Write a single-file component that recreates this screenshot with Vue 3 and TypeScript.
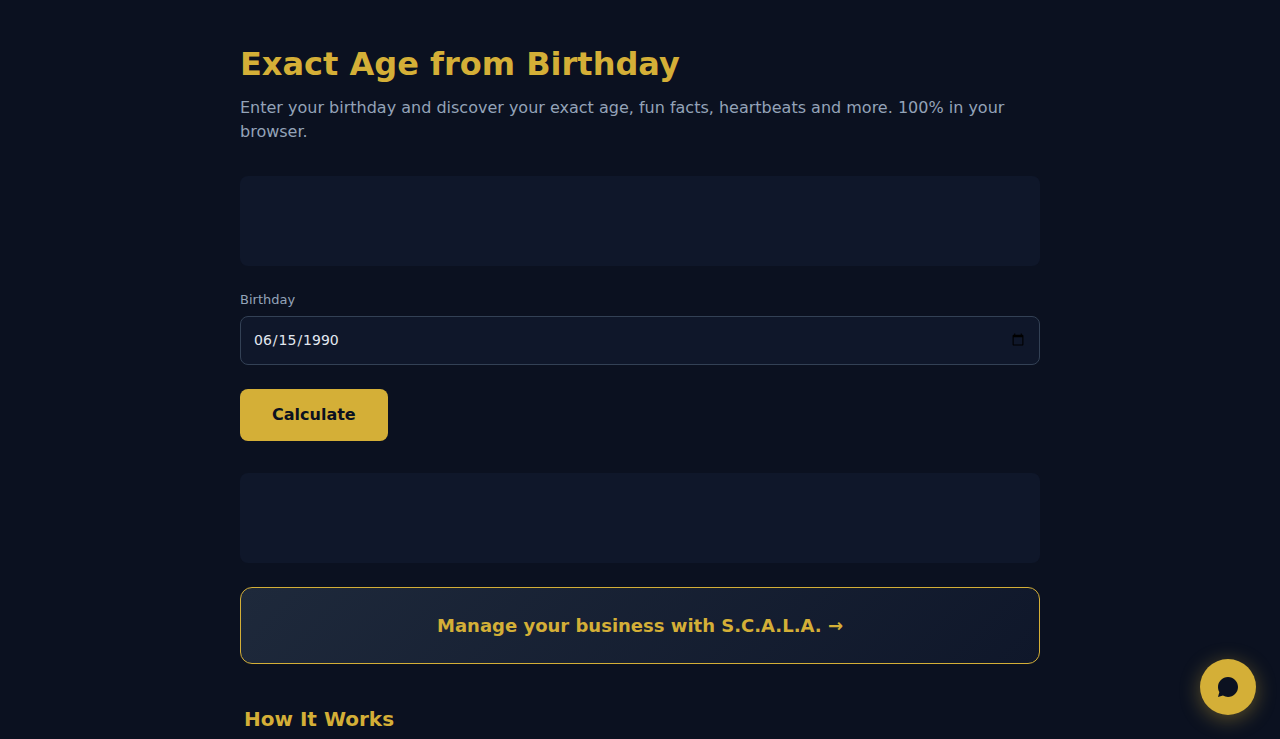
<script setup lang="ts">
import { ref } from 'vue'

const birthday = ref<string>('1990-06-15')
const years = ref<number | null>(null)

function calculate(): void {
  const born = new Date(birthday.value)
  const now = new Date()
  let age = now.getFullYear() - born.getFullYear()
  const beforeBirthday =
    now.getMonth() < born.getMonth() ||
    (now.getMonth() === born.getMonth() && now.getDate() < born.getDate())
  if (beforeBirthday) age -= 1
  years.value = age
}
</script>

<template>
  <main class="page">
    <h1>Exact Age from Birthday</h1>
    <p class="intro">
      Enter your birthday and discover your exact age, fun facts, heartbeats and more. 100% in your browser.
    </p>
    <div class="slot"></div>
    <form @submit.prevent="calculate">
      <label for="birthday">Birthday</label>
      <input id="birthday" v-model="birthday" type="date" />
      <button class="calculate" type="submit">Calculate</button>
    </form>
    <output v-if="years !== null" class="result">{{ years }}</output>
    <div class="slot"></div>
    <a class="promo" href="#">Manage your business with S.C.A.L.A. →</a>
    <section class="how">
      <h2>How It Works</h2>
    </section>
  </main>
  <button class="chat" type="button" aria-label="Open chat">
    <svg viewBox="0 0 24 24" width="24" height="24" aria-hidden="true">
      <path d="M12 2C6.48 2 2 6.48 2 12c0 1.85.5 3.58 1.38 5.06L2 22l4.94-1.38A9.95 9.95 0 0 0 12 22c5.52 0 10-4.48 10-10S17.52 2 12 2z" />
    </svg>
  </button>
</template>

<style>
body {
  margin: 0;
  background: #0b1120;
}
</style>

<style scoped>
.page {
  box-sizing: border-box;
  max-width: 848px;
  margin: 0 auto;
  padding: 40px 24px 0;
  color: #e2e8f0;
  font-family: "DejaVu Sans", sans-serif;
  font-size: 16px;
  line-height: 24px;
}
h1 {
  margin: 0 0 8px;
  color: #d4af37;
  font-size: 32px;
  line-height: 48px;
}
.intro {
  margin: 0 0 32px;
  color: #94a3b8;
}
.slot {
  min-height: 90px;
  margin-bottom: 24px;
  border-radius: 8px;
  background: #0f172a;
}
form {
  display: flex;
  flex-direction: column;
  align-items: flex-start;
  margin-bottom: 32px;
}
label {
  margin-bottom: 6px;
  color: #94a3b8;
  font-size: 13px;
  line-height: 20px;
}
input {
  box-sizing: border-box;
  width: 100%;
  height: 49px;
  margin: 0 0 24px;
  padding: 12px 12px 14px;
  border: 1px solid #334155;
  border-radius: 8px;
  background: #0f172a;
  color: #e2e8f0;
  font-family: inherit;
  font-size: 14px;
}
.calculate {
  padding: 14px 32px;
  border: 0;
  border-radius: 8px;
  background: #d4af37;
  color: #0b1120;
  font: bold 16px/24px "DejaVu Sans", sans-serif;
  cursor: pointer;
}
.result {
  display: block;
  margin-bottom: 24px;
}
.promo {
  display: block;
  padding: 24px;
  border: 1px solid #d4af37;
  border-radius: 12px;
  background: linear-gradient(135deg, #1e293b, #0f172a);
  color: #d4af37;
  font-size: 18px;
  font-weight: bold;
  line-height: 27px;
  text-align: center;
  text-decoration: none;
}
.how {
  margin-top: 40px;
  padding: 0 4px;
}
h2 {
  margin: 0;
  color: #d4af37;
  font-size: 20px;
  line-height: 30px;
}
.chat {
  position: fixed;
  right: 24px;
  bottom: 24px;
  display: flex;
  align-items: center;
  justify-content: center;
  width: 56px;
  height: 56px;
  padding: 0;
  border: 0;
  border-radius: 50%;
  background: #d4af37;
  box-shadow: 0 4px 20px rgba(212, 175, 55, 0.4);
  cursor: pointer;
}
.chat path {
  fill: #0b1120;
}
</style>
